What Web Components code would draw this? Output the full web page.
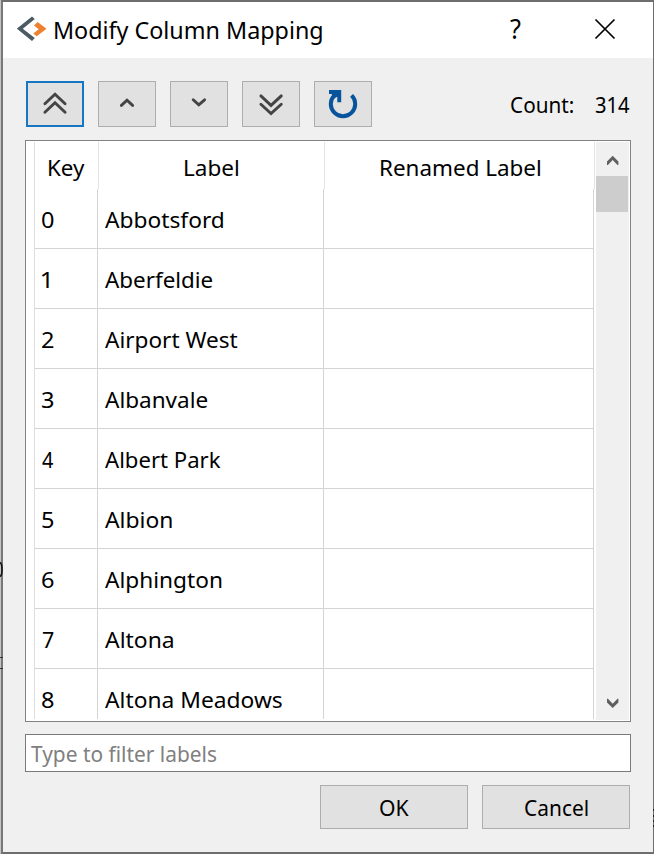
<!DOCTYPE html>
<html lang="en"><head><meta charset="utf-8"><title>Modify Column Mapping</title>
<style>
html,body{margin:0;width:654px;height:854px;overflow:hidden}
body{font-family:"Noto Sans","Open Sans",sans-serif;font-size:22.5px;color:#000;background:#c4c4c4}
</style></head><body>
<mapping-dialog></mapping-dialog>
<script>
const root=(el,html)=>{const r=el.attachShadow({mode:'open'});const t=document.createElement('template');t.innerHTML=html;r.append(t.content.cloneNode(true));return r;};
const ctx=document.createElement('canvas').getContext('2d');

// A single line of text whose visible glyphs span exactly the width "w".
customElements.define('fit-text',class extends HTMLElement{
  connectedCallback(){
    if(this.shadowRoot)return;
    const w=+this.getAttribute('w'),s=+this.getAttribute('size')||22.5,txt=this.textContent;
    ctx.font=s+'px "Noto Sans","Open Sans",sans-serif';
    const m=ctx.measureText(txt),ink=m.actualBoundingBoxRight+m.actualBoundingBoxLeft,k=w/ink;
    root(this,`<style>:host{display:block;flex:none;width:${w}px;height:30px;line-height:30px;font-size:${s}px;white-space:nowrap}
    span{display:block;width:max-content;transform-origin:0 0;transform:translateX(${m.actualBoundingBoxLeft*k}px) scaleX(${k})}</style><span><slot></slot></span>`);
  }
});

customElements.define('title-bar',class extends HTMLElement{
  constructor(){super();root(this,`<style>
  :host{display:flex;height:56px;background:#fff;align-items:flex-start;box-sizing:border-box;padding:0 0 0 14px}
  .logo{margin-top:14px;width:30px;height:26px;margin-right:7.5px}
  .t{padding-top:13px}.q{padding-top:12px;margin-left:187.5px}.x{margin:16px 0 0 74px}
  svg{display:block;flex:none}</style>
  <svg class="logo" viewBox="17 16 30 26"><path d="M32 16.6l2.8 2.3-12 9.9 12 9.3-2.8 2.8-15.2-12.2z" fill="#4b5a63"/><path d="M37.6 22l8.9 6.8-9.8 7.5-3.4-2.9 5.4-4.2-4.7-3.8z" fill="#ee8130"/></svg>
  <div class="t"><fit-text w="267.5" size="23">Modify Column Mapping</fit-text></div>
  <div class="q"><fit-text w="10.5" size="26.5">?</fit-text></div>
  <svg class="x" width="22" height="22" viewBox="0 0 22 22" stroke="#000" stroke-width="1.7"><path d="M1.5 1.5l19 19M20.5 1.5l-19 19"/></svg>`);}
});

const icons={
 top:'<path d="M18.9 22.8L29 13.3l10.1 9.5M18.9 31.2L29 21.7l10.1 9.5"/>',
 up:'<path d="M23.4 24.4l5.6-5.1 5.6 5.1"/>',
 down:'<path d="M23.2 18.8l5.6 5.1 5.8-5.1"/>',
 bottom:'<path d="M18.9 14.9L29 24.4l10.3-9.5M18.9 23.2L29 32.6l10.3-9.4"/>',
 reset:'<path d="M37.6 14.4A12.2 12.2 0 1 1 20.4 14.4" stroke="#08549c" stroke-width="4" stroke-linecap="butt"/><path d="M15 9h12.2v12.2h-3.9v-5.5l-3 1.6-2.8-4.3h-2.5z" fill="#08549c" stroke="none"/>'
};
customElements.define('icon-button',class extends HTMLElement{
  connectedCallback(){if(this.shadowRoot)return;root(this,`<style>
  :host{display:block;box-sizing:border-box;width:58px;height:46px;border:1px solid #adadad;background:#e1e1e1}
  :host([focused]){border:2px solid #1577c4}
  svg{display:block;margin:-1px}:host([focused]) svg{margin:-2px}</style>
  <svg width="58" height="46" viewBox="0 0 58 46" fill="none" stroke="#444" stroke-width="2.9" stroke-linecap="round">${icons[this.getAttribute('icon')]}</svg>`);}
});

customElements.define('tool-row',class extends HTMLElement{
  constructor(){super();root(this,`<style>
  :host{display:flex;height:46px;padding-left:1px}
  .b{display:flex;gap:14px}.c{display:flex;gap:21.5px;margin-left:139px;padding-top:8px}</style>
  <div class="b"><icon-button icon="top" focused></icon-button><icon-button icon="up"></icon-button><icon-button icon="down"></icon-button><icon-button icon="bottom"></icon-button><icon-button icon="reset"></icon-button></div>
  <div class="c"><fit-text w="62.5" size="22">Count:</fit-text><fit-text w="35" size="22">314</fit-text></div>`);}
});

customElements.define('table-row',class extends HTMLElement{
  connectedCallback(){if(this.shadowRoot)return;const a=n=>this.getAttribute(n);root(this,`<style>
  :host{display:grid;grid-template-columns:63px 226px 270px;height:60px}
  div{box-sizing:border-box;border-right:1px solid #d4d4d4;border-bottom:1px solid #d4d4d4;padding:16px 0 0 6.8px}
  div:first-child{padding-left:6.3px}</style>
  <div><fit-text w="${a('key')==='1'?6.6:11.5}">${a('key')}</fit-text></div><div><fit-text w="${a('w')}">${a('label')}</fit-text></div><div></div>`);}
});

customElements.define('scroll-bar',class extends HTMLElement{
  constructor(){super();root(this,`<style>
  :host{display:flex;flex-direction:column;width:33px;height:578px;background:#f0f0f0}
  i{display:block;width:32px;height:36px;background:#cdcdcd}svg{display:block}.d{margin-top:auto}</style>
  <svg width="33" height="34" viewBox="0 0 33 34"><path d="M11 23v-3.6l5.7-5.6 5.7 5.6V23h-.9l-4.8-4.9-4.8 4.9z" fill="#5f5f5f"/></svg><i></i>
  <svg class="d" width="33" height="34" viewBox="0 0 33 34"><path d="M11 12.8v3.6l5.7 5.6 5.7-5.6v-3.6h-.9l-4.8 4.9-4.8-4.9z" fill="#5f5f5f"/></svg>`);}
});

const data=[['Abbotsford',118],['Aberfeldie',107.5],['Airport West',132.5],['Albanvale',102.5],['Albert Park',115.5],['Albion',67.5],['Alphington',117],['Altona',68],['Altona Meadows',177]];
customElements.define('mapping-table',class extends HTMLElement{
  constructor(){super();root(this,`<style>
  :host{display:flex;box-sizing:border-box;width:606px;height:582px;border:1px solid #828282;background:#fff;padding:1px 1px 1px 8px;justify-content:space-between}
  .g{width:561px;height:577px;overflow:hidden;box-sizing:border-box;border-left:1px solid #dedede}
  .h{display:grid;grid-template-columns:64px 226px 270px;height:47px}
  .h div{box-sizing:border-box;border-right:1px solid #e3e3e3;padding-top:11px}
  .h div:nth-child(1){padding-left:14.2px}.h div:nth-child(2){padding-left:86.2px}.h div:nth-child(3){padding-left:55.7px}</style>
  <div class="g"><div class="h"><div><fit-text w="36">Key</fit-text></div><div><fit-text w="53">Label</fit-text></div><div><fit-text w="159">Renamed Label</fit-text></div></div>
  ${data.map(([l,w],i)=>`<table-row key="${i}" label="${l}" w="${w}"></table-row>`).join('')}</div>
  <scroll-bar></scroll-bar>`);}
});

customElements.define('filter-field',class extends HTMLElement{
  constructor(){super();root(this,`<style>:host{display:block;box-sizing:border-box;width:606px;height:38px;border:1px solid #7a7a7a;background:#fff;color:#808080;padding:3px 4.8px}</style>
  <fit-text w="185.5" size="22">Type to filter labels</fit-text>`);}
});

customElements.define('push-button',class extends HTMLElement{
  constructor(){super();root(this,`<style>:host{display:flex;justify-content:center;box-sizing:border-box;width:148px;height:44px;border:1px solid #adadad;background:#e1e1e1;padding-top:6px}</style><slot></slot>`);}
});

customElements.define('mapping-dialog',class extends HTMLElement{
  constructor(){super();root(this,`<style>
  :host{display:block;box-sizing:border-box;margin-left:1px;width:653px;height:854px;border:2px solid #6e6e6e;border-left-color:#787878;border-right-width:1px;background:#f0f0f0;position:relative}
  main{display:flex;flex-direction:column;padding:23px 0 0 22px}
  tool-row{margin-bottom:13px}filter-field{margin-top:12px}
  .f{display:flex;gap:14px;margin:13px 0 0 295px}
  .edge{position:absolute;left:-3px;top:-2px}
  </style>
  <title-bar></title-bar><main><tool-row></tool-row><mapping-table></mapping-table><filter-field></filter-field>
  <div class="f"><push-button><fit-text w="29" size="22">OK</fit-text></push-button><push-button><fit-text w="62.5" size="22">Cancel</fit-text></push-button></div></main>
  <svg class="edge" width="654" height="854"><path d="M0 562.5Q2 563.5 2 569.5T0 576.5" fill="none" stroke="#111" stroke-width="1.6"/><path d="M0 657.5h3M0 668.5h3" stroke="#333"/><path d="M653.5 809v2M653.5 815v2M653.5 820v2M653.5 825v2" stroke="#2b1a2e"/></svg>`);}
});
</script></body></html>
